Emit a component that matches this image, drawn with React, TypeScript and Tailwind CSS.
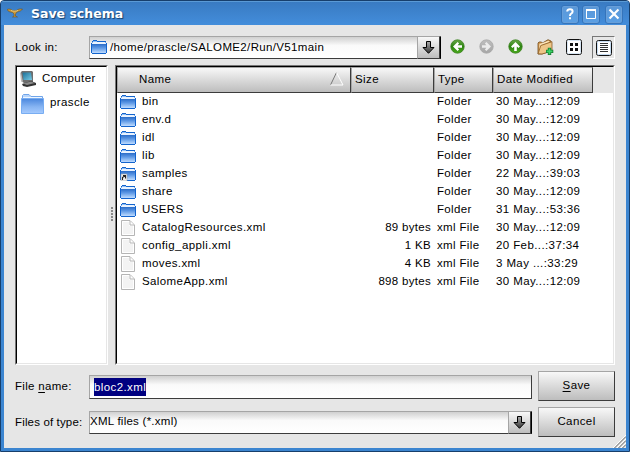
import React from 'react';

type Entry = { name: string; kind: 'folder' | 'link' | 'file'; size?: string; type: string; date: string };

const entries: Entry[] = [
  { name: 'bin', kind: 'folder', type: 'Folder', date: '30 May...:12:09' },
  { name: 'env.d', kind: 'folder', type: 'Folder', date: '30 May...:12:09' },
  { name: 'idl', kind: 'folder', type: 'Folder', date: '30 May...:12:09' },
  { name: 'lib', kind: 'folder', type: 'Folder', date: '30 May...:12:09' },
  { name: 'samples', kind: 'link', type: 'Folder', date: '22 May...:39:03' },
  { name: 'share', kind: 'folder', type: 'Folder', date: '30 May...:12:09' },
  { name: 'USERS', kind: 'folder', type: 'Folder', date: '31 May...:53:36' },
  { name: 'CatalogResources.xml', kind: 'file', size: '89 bytes', type: 'xml File', date: '30 May...:12:09' },
  { name: 'config_appli.xml', kind: 'file', size: '1 KB', type: 'xml File', date: '20 Feb...:37:34' },
  { name: 'moves.xml', kind: 'file', size: '4 KB', type: 'xml File', date: '3 May ...:33:29' },
  { name: 'SalomeApp.xml', kind: 'file', size: '898 bytes', type: 'xml File', date: '30 May...:12:09' },
];

const raised = 'border border-t-[#a5a5a5] border-l-[#a5a5a5] border-b-[#3c3c3c] border-r-[#3c3c3c] bg-linear-to-b from-[#f8f8f8] to-[#bdbdbd]';
const field = 'border border-t-[#a5a5a5] border-l-[#a5a5a5] border-b-[#3c3c3c] bg-white bg-linear-to-b from-[#d0d0d0] via-[#fafafa] via-40% to-white';

function Folder({ link = false }: { link?: boolean }) {
  return (
    <svg width="16" height="14" viewBox="0 0 16 14" className="block shrink-0">
      <defs>
        <linearGradient id="fg" x1="0" y1="0" x2="0" y2="1">
          <stop offset="0" stopColor="#2a6cc8" />
          <stop offset="0.45" stopColor="#5f9ae6" />
          <stop offset="1" stopColor="#bfdcff" />
        </linearGradient>
      </defs>
      <path d="M1 4h14v9H1z" fill="url(#fg)" />
      <path d="M1 2h14v2H1z" fill="#e9f3ff" />
      <path d="M2 1h4v1H2z" fill="#8cbcf5" />
      <path d="M2 0h4v1H2zM1 1h1v1H1zM6 1h9v1H6zM0 3h1v10H0zM15 3h1v10h-1zM1 13h14v1H1zM1 2h.5v1H1zM14.500 2h.5v1h-.5z" fill="#1264ce" />
      {link && (
        <g>
          <path d="M1 7h6v7H1z" fill="#eee" stroke="#999" strokeWidth=".5" />
          <path d="M2.500 13v-2.500L5 8.800M3 8.500h2.500V11.500" fill="none" stroke="#222" strokeWidth="1.100" />
        </g>
      )}
    </svg>
  );
}

function PlaceFolder() {
  return (
    <svg width="23" height="20" viewBox="0 0 23 20" className="block shrink-0">
      <defs>
        <linearGradient id="pf" x1="0" y1="0" x2="0" y2="1">
          <stop offset="0" stopColor="#4a87de" />
          <stop offset="0.55" stopColor="#86b4f2" />
          <stop offset="1" stopColor="#a5cbff" />
        </linearGradient>
      </defs>
      <path d="M1.500 4V1.500L2.500.5H8l2 2h11.500V5z" fill="#b8d5fa" stroke="#70a5ea" />
      <path d="M2 3.500h19" stroke="#eef6ff" />
      <path d="M.5 4.500h22v15H.5z" fill="url(#pf)" stroke="#78adf2" />
    </svg>
  );
}

function FileIcon() {
  return (
    <svg width="14" height="16" viewBox="0 0 14 16" className="block shrink-0">
      <path d="M.5.5h8.500l4.500 4.500v10.500H.5z" fill="#f3f3f3" stroke="#b5b5b5" />
      <path d="M1.500 1.500h7v4h4v9h-11z" fill="none" stroke="#fff" />
      <path d="M9 1v4h4" fill="#fff" stroke="#b5b5b5" />
    </svg>
  );
}

function Computer() {
  return (
    <svg width="16" height="16" viewBox="0 0 16 16" className="block shrink-0">
      <defs>
        <linearGradient id="scr" x1="0" y1="0" x2="1" y2="1">
          <stop offset="0" stopColor="#1a6e96" />
          <stop offset="1" stopColor="#77cbe6" />
        </linearGradient>
      </defs>
      <path d="M1 1l1-1h10l1 1v10l-1 1H4L1 10z" fill="#6e6e6e" />
      <path d="M0 2l1-1 2 10-2-1z" fill="#bbb" />
      <path d="M2.500 1.500h8.500L12 9H3.500z" fill="url(#scr)" />
      <path d="M2 13l9-3 5 2v2l-9 2-4-1z" fill="#333" />
      <path d="M3 12.500l8-2 4 1.500-8 2z" fill="#8a8a8a" />
    </svg>
  );
}

function Round({ dir, gray = false }: { dir: 'left' | 'right' | 'up'; gray?: boolean }) {
  const turn = dir === 'left' ? 'rotate(0 7.5 7.5)' : dir === 'up' ? 'rotate(90 7.5 7.5)' : 'rotate(180 7.5 7.5)';
  return (
    <svg width="15" height="15" viewBox="0 0 15 15" className="block shrink-0">
      <defs>
        <linearGradient id="green" x1="0" y1="0" x2="0" y2="1">
          <stop offset="0" stopColor="#6ba94a" />
          <stop offset="0.5" stopColor="#2c8410" />
          <stop offset="1" stopColor="#4dac1f" />
        </linearGradient>
        <linearGradient id="gray" x1="0" y1="0" x2="0" y2="1">
          <stop offset="0" stopColor="#bebebe" />
          <stop offset="1" stopColor="#a6a6a6" />
        </linearGradient>
      </defs>
      <circle cx="7.5" cy="7.5" r="6.700" fill={gray ? 'url(#gray)' : 'url(#green)'} stroke={gray ? '#aaa' : '#3b8121'} strokeWidth=".8" />
      <g transform={turn}>
        <path d="M12 6.200H7.600L9.100 4.500 7.600 3 3 7.500 7.600 12 9.100 10.500 7.600 8.800H12z" fill={gray ? '#ececec' : '#fff'} />
      </g>
    </svg>
  );
}

function NewFolder() {
  return (
    <svg width="17" height="17" viewBox="0 0 17 17" className="block shrink-0">
      <path d="M1 4l1-1h2.500l1 1L11 .7l3 1.300V12l-9 3H1z" fill="#d79d52" stroke="#704a1c" strokeWidth=".8" />
      <path d="M2.500 5L11.500 1.800 12.500 3 4 6.200 2 12z" fill="#fbe5bd" />
      <path d="M1 14.800L3.800 6.500 15 2.700V12l-10 3z" fill="#eec688" stroke="#8a5c25" strokeWidth=".8" />
      <path d="M12.500 8.700v7.300M9 12.400h7.300" stroke="#187d30" strokeWidth="3.400" />
      <path d="M12.500 9.600v5.700M9.700 12.400h5.700" stroke="#3ed468" strokeWidth="1.700" />
    </svg>
  );
}

function DropArrow() {
  return (
    <svg width="13" height="13" viewBox="0 0 13 13" className="block">
      <defs>
        <linearGradient id="da" x1="0" y1="0" x2="0" y2="1">
          <stop offset="0" stopColor="#aaa" />
          <stop offset="1" stopColor="#333" />
        </linearGradient>
      </defs>
      <path d="M4.500.5h4v6h3.500L6.500 12.300 1 6.500h3.500z" fill="url(#da)" stroke="#000" />
    </svg>
  );
}

function TitleButton({ children }: { children: React.ReactNode }) {
  return (
    <div className="flex h-[19px] w-[18px] items-center justify-center rounded-[3px] border border-[#3474bb] bg-linear-to-b from-[#5b98d8] to-[#5a9fe4] shadow-[inset_0_0_0_1px_#689fd9]">
      <svg width="16" height="16" viewBox="0 0 16 16" className="block shrink-0">{children}</svg>
    </div>
  );
}

export default function App() {
  return (
    <div className="flex h-[452px] w-[630px] flex-col overflow-hidden rounded-t-[4px] border border-[#173f6c] bg-[#3c85d0] font-['Liberation_Sans',Arial,sans-serif] text-[11.5px] leading-4 tracking-[0.4px] whitespace-pre text-black select-none">
      <header className="flex h-[24px] shrink-0 items-center border-t border-[#5a9ad6] bg-linear-to-b from-[#397bc2] to-[#438ddb] pt-px pr-[6px] pl-[6px]">
        <svg width="16" height="10" viewBox="0 0 16 10" className="mb-[2px] block">
          <path d="M0 1.500c2-.8 4-.5 5.500 1h4C11 1 13 .8 15.500 1c-1 1.700-3 2.500-5.500 3L8.500 6v2l2 1h-5l1.500-1V6L5.500 4.500C3 4 1 3.500 0 1.500z" fill="#c9983a" stroke="#66522c" strokeWidth=".6" />
          <path d="M4 2.500c2 .8 5 .8 7 0" stroke="#f4d98c" fill="none" strokeWidth=".8" />
        </svg>
        <h1 className="ml-[8px] flex-1 font-['DejaVu_Sans',sans-serif] text-[12.5px] font-bold tracking-normal text-white [text-shadow:1px_1px_1px_#173f6c]">Save schema</h1>
        <div className="flex">
          <TitleButton><path d="M5.200 5.500Q5.400 3.300 8 3.300t2.600 2.200Q10.600 7 9.200 7.700 8 8.300 8 10M8 11.200v2" fill="none" stroke="#fff" strokeWidth="2" /></TitleButton>
          <div className="ml-[3px]"><TitleButton><path d="M3.500 3.500h9v9h-9z" fill="none" stroke="#fff" /><path d="M3 4h10" stroke="#fff" strokeWidth="2" /></TitleButton></div>
          <div className="ml-[5px]"><TitleButton><path d="M4.300 4.300l7.400 7.400M11.700 4.300l-7.400 7.400" stroke="#fff" strokeWidth="2.200" strokeLinecap="square" /></TitleButton></div>
        </div>
      </header>

      <main className="mx-[3px] mb-[3px] flex min-h-0 flex-1 flex-col bg-[#e6e6e6] pr-[11px] pl-[11px]">
        <div className="mt-[11px] flex h-[23px] shrink-0">
          <span className="w-[74px] pt-[3px] tracking-[0.3px]">Look in:</span>
          <div className={`flex w-[352px] ${field}`}>
            <div className="ml-[1px] flex flex-1 pt-[3px]"><Folder /><span className="-mt-px ml-[3px] tracking-[0.35px]">/home/prascle/SALOME2/Run/V51main</span></div>
            <div className={`-mt-px -mb-px flex w-[23px] items-center justify-center ${raised}`}><DropArrow /></div>
          </div>
          <div className="ml-[9px] flex pt-[3px]">
            <Round dir="left" />
            <div className="ml-[14px]"><Round dir="right" gray /></div>
            <div className="ml-[14px]"><Round dir="up" /></div>
            <div className="ml-[14px]"><NewFolder /></div>
            <svg width="16" height="16" viewBox="0 0 16 16" className="ml-[12px] block">
              <rect x=".5" y=".5" width="15" height="15" rx="2" fill="#fff" stroke="#111" />
              <rect x="1.500" y="1.500" width="13" height="13" rx="1" fill="none" stroke="#d6e4f2" />
              <path d="M4 4h3v3H4zM9 4h3v3H9zM4 9h3v3H4zM9 9h3v3H9z" fill="#111" />
            </svg>
          </div>
          <div className="ml-[10px] flex h-[23px] w-[23px] items-center justify-center border border-t-[#777] border-l-[#777] border-r-white border-b-white pt-px">
            <svg width="16" height="16" viewBox="0 0 16 16" className="block">
              <rect x=".5" y=".5" width="15" height="15" rx="2" fill="#fff" stroke="#111" />
              <rect x="1.500" y="1.500" width="13" height="13" rx="1" fill="none" stroke="#c6dcf2" />
              <path d="M4 3.500h8M4 5.500h8M4 7.500h8M4 9.500h8M4 11.500h8" stroke="#333" />
            </svg>
          </div>
        </div>

        <div className="mt-[6px] flex h-[300px] shrink-0">
          <aside className="w-[93px] border border-t-[#777] border-l-[#777] border-r-white border-b-white">
            <div className="h-full border border-t-black border-l-black border-r-[#e6e6e6] border-b-[#e6e6e6] bg-white">
              <div className="flex pt-[4px] pl-[3px]"><Computer /><span className="-mt-px ml-[6px]">Computer</span></div>
              <div className="flex pt-[7px] pl-[4px]"><PlaceFolder /><span className="ml-[6px]">prascle</span></div>
            </div>
          </aside>
          <div className="flex w-[7px] flex-col items-center gap-[1px] pt-[142px]">
            {[0, 1, 2, 3, 4].map((i) => <i key={i} className="block h-[2px] w-[2px] bg-[#888]" />)}
          </div>
          <section className="w-[500px] border border-t-[#777] border-l-[#777] border-r-white border-b-white">
            <div className="h-full border border-t-black border-l-black border-r-[#e6e6e6] border-b-[#e6e6e6] bg-white">
              <div className="flex h-[26px] bg-[#e6e6e6]">
                <div className={`flex w-[234px] justify-between pt-[3px] pr-[6px] pl-[21px] ${raised}`}>
                  <span>Name</span>
                  <svg width="14" height="15" viewBox="0 0 14 15" className="block"><path d="M.5 14L6.500 1.500" stroke="#777" /><path d="M6.500 1.500L13 14H.5" fill="none" stroke="#fff" /></svg>
                </div>
                <div className={`w-[83px] pt-[3px] pl-[3px] ${raised}`}>Size</div>
                <div className={`w-[59px] pt-[3px] pl-[3px] ${raised}`}>Type</div>
                <div className={`w-[100px] pt-[3px] pl-[3px] ${raised}`}>Date Modified</div>
              </div>
              {entries.map((e) => (
                <div key={e.name} className="flex h-[18px]">
                  <div className="flex w-[234px] pl-[3px]">
                    <div className="w-[22px]">
                      {e.kind === 'file' ? <div className="pt-px pl-px"><FileIcon /></div> : <div className="pt-[2px]"><Folder link={e.kind === 'link'} /></div>}
                    </div>
                    <span>{e.name}</span>
                  </div>
                  <div className="w-[81px] pr-px text-right tracking-[0.3px]">{e.size}</div>
                  <div className="w-[61px] pl-[5px] tracking-[0.35px]">{e.type}</div>
                  <div className="pl-[3px]">{e.date}</div>
                </div>
              ))}
            </div>
          </section>
        </div>

        <div className="mt-[6px] flex h-[66px] shrink-0 justify-between">
          <div className="flex w-[517px] flex-col">
            <div className="mt-[4px] flex h-[24px]">
              <span className="w-[74px] pt-[3px] tracking-[0.3px]">File <u className="underline-offset-2">n</u>ame:</span>
              <div className={`w-[443px] border-r-[#3c3c3c] pt-[2px] pl-[4px] ${field}`}>
                <span className="inline-block h-[18px] w-[52px] bg-[#000080] pt-px text-white">bloc2.xml</span>
              </div>
            </div>
            <div className="mt-[12px] flex h-[23px]">
              <span className="w-[74px] pt-[3px] tracking-[0.15px]">Files of type:</span>
              <div className={`flex w-[443px] ${field}`}>
                <span className="flex-1 pt-[1px] tracking-[0.25px]">XML files (*.xml)</span>
                <div className={`-mt-px -mb-px flex w-[23px] items-center justify-center ${raised}`}><DropArrow /></div>
              </div>
            </div>
          </div>
          <div className="flex w-[77px] flex-col gap-[6px]">
            <button className={`h-[30px] w-full pb-[2px] ${raised}`}><u className="underline-offset-2">S</u>ave</button>
            <button className={`h-[30px] w-full pb-[2px] ${raised}`}>Cancel</button>
          </div>
        </div>
        <div className="-mr-[11px] flex min-h-0 flex-1 items-end justify-end">
          <svg width="13" height="13" viewBox="0 0 13 13" className="block shrink-0">
            <path d="M0 13L13 0M4 13L13 4M8 13L13 8" stroke="#fff" />
            <path d="M1.500 13L13 1.500M5.500 13L13 5.500M9.500 13L13 9.500" stroke="#666" />
          </svg>
        </div>
      </main>
    </div>
  );
}
